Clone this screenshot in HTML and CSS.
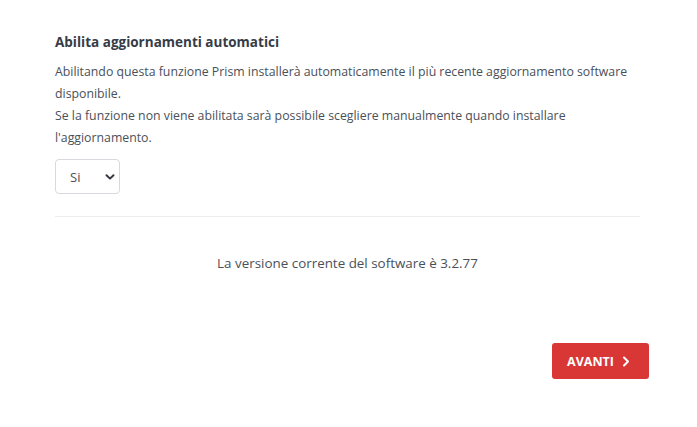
FILE: index.html
```html
<!DOCTYPE html>
<html lang="it">
<head>
<meta charset="utf-8">
<link rel="stylesheet" href="styles.css">
</head>
<body>
<div class="page">
  <section class="settings">
    <h3 class="title">Abilita aggiornamenti automatici</h3>
    <p class="desc">Abilitando questa funzione Prism installerà automaticamente il più recente aggiornamento software disponibile.<br>Se la funzione non viene abilitata sarà possibile scegliere manualmente quando installare l'aggiornamento.</p>
    <div class="select">
      <span class="select-value">Si</span>
      <svg class="chev" width="10" height="8" viewBox="0 0 10 8"><path d="M1.5 2.2 L5 5.6 L8.5 2.2" fill="none" stroke="#343a40" stroke-width="2" stroke-linecap="round" stroke-linejoin="round"/></svg>
    </div>
    <hr class="divider">
    <p class="version">La versione corrente del software è 3.2.77</p>
  </section>
  <div class="footer">
    <button class="btn-next">AVANTI
      <svg width="8" height="11" viewBox="0 0 8 11"><path d="M2 1.5 L6 5.5 L2 9.5" fill="none" stroke="#fff" stroke-width="2" stroke-linecap="round" stroke-linejoin="round"/></svg>
    </button>
  </div>
</div>
</body>
</html>
```
FILE: styles.css
```css
html, body {
  margin: 0;
  padding: 0;
  background: #fff;
}
body {
  font-family: "Open Sans", "Noto Sans", sans-serif;
  color: #4a5059;
  font-size: 13px;
}
.page {
  padding: 31px 48px 0 55px;
}
.settings {
  width: 585px;
}
.title {
  margin: 0;
  font-size: 13.5px;
  font-weight: 700;
  color: #363c47;
  line-height: 22px;
}
.desc {
  margin: 8px 0 0;
  line-height: 22px;
  font-size: 12.3px;
}
.select {
  margin-top: 10px;
  height: 33px;
  border: 1px solid #d6d9dd;
  border-radius: 4px;
  display: flex;
  align-items: center;
  justify-content: space-between;
  padding: 0 4px 0 14px;
  box-sizing: content-box;
  width: 45px;
}
.select-value {
  font-size: 13px;
  color: #4a5059;
}
.divider {
  margin: 22px 0 0;
  border: 0;
  border-top: 1px solid #ebedef;
}
.version {
  margin: 35px 0 0;
  text-align: center;
  font-size: 13.4px;
  line-height: 22px;
}
.footer {
  display: flex;
  justify-content: flex-end;
  margin-top: 69px;
}
.btn-next {
  width: 97px;
  height: 36px;
  border: 0;
  border-radius: 3px;
  background: #d93636;
  color: #fff;
  font-family: "Open Sans", sans-serif;
  font-weight: 700;
  font-size: 12.5px;
  display: flex;
  align-items: center;
  justify-content: center;
  gap: 8px;
  padding: 0 4px 0 0;
}
```
